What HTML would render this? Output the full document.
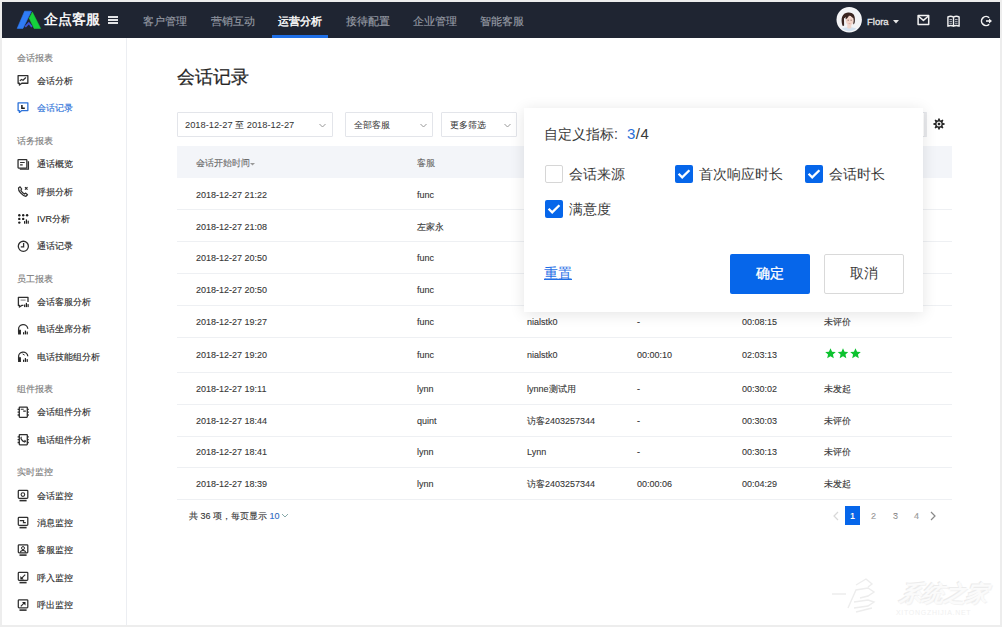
<!DOCTYPE html>
<html><head><meta charset="utf-8">
<style>
*{margin:0;padding:0;box-sizing:border-box}
html,body{width:1002px;height:627px;overflow:hidden;background:#fff;font-family:"Liberation Sans",sans-serif;}
#frame{position:absolute;left:0;top:0;width:1002px;height:627px;border:solid #ededed;border-width:2px 2px 2px 2px;pointer-events:none;z-index:10}
#hdr{position:absolute;left:1px;top:1px;width:999px;height:37px;background:#1f2532}
.nav{position:absolute;top:13px;font-size:11px;line-height:14px;color:#959aa3;-webkit-text-stroke:.15px #959aa3;white-space:nowrap}
#side{position:absolute;left:1px;top:38px;width:126px;height:587px;border-right:1px solid #eceef2}
.st{position:absolute;left:17px;font-size:9px;line-height:10px;color:#808080;-webkit-text-stroke:.15px #808080;white-space:nowrap}
.si{position:absolute;left:37px;font-size:9px;line-height:10px;color:#2a2a2a;-webkit-text-stroke:.12px #2a2a2a;white-space:nowrap}
.si.act{color:#2d72d9;-webkit-text-stroke:.12px #2d72d9}
.c{position:absolute;font-size:9px;line-height:11px;color:#363636;white-space:nowrap;-webkit-text-stroke:.1px #363636}
.n{display:inline-block;transform:none}
.sep{position:absolute;left:177px;width:775px;height:1px;background:#eef0f3}
.box{position:absolute;top:112px;height:25px;border:1px solid #e3e5ea;background:#fff;border-radius:1px}
.box span{position:absolute;left:8px;top:7px;font-size:9px;line-height:11px;color:#333;white-space:nowrap}
.chev{position:absolute;top:8px;width:9px;height:9px}
.pop{position:absolute;left:524px;top:108px;width:399px;height:204px;background:#fff;box-shadow:0 2px 14px rgba(0,0,0,.11)}
.pt{position:absolute;font-size:14px;line-height:16px;color:#3a3a3a;white-space:nowrap}
.cb{position:absolute;width:18px;height:18px;border-radius:2px}
.cb.on{background:#0666ea}
.cb.off{border:1px solid #d6d6d6;background:#fff}
</style></head><body>
<div id="hdr">
  <svg style="position:absolute;left:-1px;top:-1px" width="60" height="40" viewBox="0 0 60 40">
    <path d="M24.6 11.2H31.4L22.9 28.4H17.2z" fill="#2f7cf6" stroke="#2f7cf6" stroke-width=".6" stroke-linejoin="round"/>
    <path d="M32.4 12.2L40.6 28.4H34.1L29.3 18.2z" fill="#15d13c" stroke="#15d13c" stroke-width=".6" stroke-linejoin="round"/>
    <path d="M24.6 26.2L28.8 21.8L32.6 26.2L31.3 27.4L28.8 24.6L25.9 27.4z" fill="#3d55d6"/>
  </svg>
  <div style="position:absolute;left:43px;top:10px;font-size:14px;line-height:17px;color:#fff;-webkit-text-stroke:.45px #fff;white-space:nowrap">企点客服</div>
  <div style="position:absolute;left:107px;top:15px;width:10.3px;height:2px;background:#e2e3e6"></div>
  <div style="position:absolute;left:107px;top:18px;width:10.3px;height:2px;background:#e2e3e6"></div>
  <div style="position:absolute;left:107px;top:21px;width:10.3px;height:2px;background:#e2e3e6"></div>
  <div class="nav" style="left:142px">客户管理</div>
  <div class="nav" style="left:210px">营销互动</div>
  <div class="nav" style="left:277px;color:#fff;-webkit-text-stroke:.4px #fff">运营分析</div>
  <div style="position:absolute;left:271px;top:34px;width:56px;height:3px;background:#1f6fe6"></div>
  <div class="nav" style="left:345px">接待配置</div>
  <div class="nav" style="left:412px">企业管理</div>
  <div class="nav" style="left:479px">智能客服</div>
  <!-- avatar -->
  <svg style="position:absolute;left:833px;top:4px" width="30" height="30" viewBox="0 0 30 30">
    <defs><clipPath id="av"><circle cx="15.2" cy="14.7" r="11.5"/></clipPath></defs>
    <circle cx="15.2" cy="14.7" r="12.7" fill="#f6f6f8"/>
    <g clip-path="url(#av)">
      <rect width="30" height="30" fill="#f2f3f5"/>
      <path d="M3.5 30C4.5 24.5 9 22.3 15.3 22.3S25.5 24.5 26.5 30z" fill="#d3e2f0"/>
      <path d="M13.3 19.5h4v3.5c-1.3.8-2.7.8-4 0z" fill="#efd5ca"/>
      <path d="M8.4 20.5C6.6 14 7.8 8.2 14 7.6c5.6-.4 7.6 3.4 6.8 9.4-.3 1.6-.9 2.4-1.5 2.3V13c-2.5-.6-4.6-2-5.6-4-.9 2.2-2.2 3.6-3.7 4.4l.1 7.2c-.7.4-1.3.4-1.7-.1z" fill="#3a2520"/>
      <ellipse cx="15.6" cy="15.6" rx="3.9" ry="4.8" fill="#f1d4c9"/>
      <path d="M11.6 14.2c2-.9 3.2-2.6 3.8-5 1.2 1.8 2.6 3.2 4.4 3.8l-.4-3c-1.2-1.4-2.8-2-4.6-1.9-2.3.2-3.4 2.2-3.2 6.1z" fill="#3a2520"/>
      <path d="M13.6 15.2h1.3M16.5 15.2h1.3" stroke="#6b4a42" stroke-width=".7"/>
      <path d="M14.6 18.6h1.9" stroke="#d99a94" stroke-width=".7"/>
    </g>
  </svg>
  <div style="position:absolute;left:866px;top:15px;font-size:9.5px;line-height:11px;color:#e8e8e8;-webkit-text-stroke:.3px #e8e8e8;white-space:nowrap">Flora</div>
  <svg style="position:absolute;left:892px;top:18.5px" width="6" height="4" viewBox="0 0 6 4"><path d="M0 0h6L3 3.4z" fill="#e6e6e6"/></svg>
  <svg style="position:absolute;left:916px;top:13px" width="14" height="13" viewBox="0 0 14 13" fill="none" stroke="#f2f2f2" stroke-width="1.5" stroke-linejoin="round"><rect x="1.1" y="1.4" width="10.6" height="9.2"/><path d="M1.3 2l5.1 4.4L11.5 2"/></svg>
  <svg style="position:absolute;left:946px;top:14px" width="13" height="12" viewBox="0 0 13 12" fill="none" stroke="#f2f2f2" stroke-width="1.4" stroke-linejoin="round"><path d="M.9 2c1.8-.9 3.8-.9 5.6.2v9c-1.8-.9-3.8-.9-5.6 0zM12.1 2c-1.8-.9-3.8-.9-5.6.2v9c1.8-.9 3.8-.9 5.6 0z"/><path d="M2.4 4.5h2.6M2.4 6.4h2.6M2.4 8.3h2.6M8 4.5h2.6M8 6.4h2.6M8 8.3h2.6" stroke-width=".9" stroke="#b8bcc4"/></svg>
  <svg style="position:absolute;left:979px;top:14px" width="13" height="12" viewBox="0 0 13 12" fill="none" stroke="#f2f2f2" stroke-width="1.6"><path d="M9.2 2.8A4.5 4.5 0 1 0 9.2 9.2"/><path d="M6 6h3.2"/><path d="M9 3.4L12 6 9 8.6z" fill="#f2f2f2" stroke="none"/></svg>
</div>
<div id="side">
</div>
<div class="st" style="top:52.5px">会话报表</div><div class="si" style="top:75.5px">会话分析</div><svg style="position:absolute;left:17px;top:74px" width="13" height="13" viewBox="0 0 13 13" fill="none" stroke="#2f2f2f" stroke-width="1.3"><g transform="translate(0 0.50)"><path d="M1.1 1.05H10.85V8.75H4.8L2.4 10.6V8.75H1.1Z" stroke-linejoin="round"/><path d="M3.2 6l1.4-1 1.4.8 2.6-2.5" stroke-width="1.25" stroke-linecap="round" stroke-linejoin="round"/></g></svg><div class="si act" style="top:102.8px">会话记录</div><svg style="position:absolute;left:17px;top:101px" width="13" height="13" viewBox="0 0 13 13" fill="none" stroke="#2d72d9" stroke-width="1.3"><g transform="translate(0 0.80)"><path d="M1.1 1.05H10.85V8.75H4.8L2.4 10.6V8.75H1.1Z" stroke-linejoin="round"/><path d="M4.9 3.1v3.3h2.9" stroke="#1d1d1d" stroke-width="1.5"/></g></svg><div class="st" style="top:135.5px">话务报表</div><div class="si" style="top:159.0px">通话概览</div><svg style="position:absolute;left:17px;top:158px" width="13" height="13" viewBox="0 0 13 13" fill="none" stroke="#2f2f2f" stroke-width="1.3"><g transform="translate(0 0.00)"><rect x="1.05" y="1.65" width="8.8" height="8.4" rx=".5"/><path d="M11.4 3.2v7.9H2.8"/><path d="M3.1 4.5h4.6M3.1 6.9h2.6" stroke-width="1.2"/></g></svg><div class="si" style="top:186.5px">呼损分析</div><svg style="position:absolute;left:17px;top:185px" width="13" height="13" viewBox="0 0 13 13" fill="none" stroke="#2f2f2f" stroke-width="1.3"><g transform="translate(0 0.50)"><path d="M3.1 1.3L1.5 2.5C1.1 5.3 4.9 9.9 8.9 10.8L10.5 9.3 8.7 7.6 7.5 8.5C6.1 7.9 4.5 6.1 3.8 4.8L4.7 3.5Z" stroke-width="1.25" stroke-linejoin="round"/><path d="M8 1.6l2.5 2.5M10.5 1.6L8 4.1" stroke-width="1.2"/></g></svg><div class="si" style="top:213.5px">IVR分析</div><svg style="position:absolute;left:17px;top:212px" width="13" height="13" viewBox="0 0 13 13" fill="none" stroke="#2f2f2f" stroke-width="1.3"><g transform="translate(0 0.50)"><g fill="#1f1f1f" stroke="none"><circle cx="2.3" cy="2.7" r="1.2"/><circle cx="6.2" cy="2.7" r="1.2"/><circle cx="10.1" cy="2.7" r="1.2"/><circle cx="2.3" cy="6.4" r="1.2"/><circle cx="6.2" cy="6.4" r="1.2"/><circle cx="2.3" cy="10.1" r="1.2"/><rect x="7" y="8.6" width="1.2" height="2.6"/><rect x="8.8" y="6.9" width="1.2" height="4.3"/><rect x="10.6" y="8.2" width="1.2" height="3"/></g></g></svg><div class="si" style="top:241.0px">通话记录</div><svg style="position:absolute;left:17px;top:240px" width="13" height="13" viewBox="0 0 13 13" fill="none" stroke="#2f2f2f" stroke-width="1.3"><g transform="translate(0 0.00)"><circle cx="6.35" cy="6.3" r="5.05"/><path d="M6.6 3.1v3.7H3.8" stroke-width="1.3"/></g></svg><div class="st" style="top:273.5px">员工报表</div><div class="si" style="top:296.5px">会话客服分析</div><svg style="position:absolute;left:17px;top:295px" width="13" height="13" viewBox="0 0 13 13" fill="none" stroke="#2f2f2f" stroke-width="1.3"><g transform="translate(0 0.50)"><path d="M6.4 9.9H4.7L2.4 11.6V9.9H1.4V1.8H11V6.4" stroke-linejoin="round"/><path d="M3.6 4.6h5" stroke-width="1.1" stroke="#8a8a8a"/><g fill="#1f1f1f" stroke="none"><rect x="7.1" y="9" width="1.2" height="2.6"/><rect x="8.8" y="7.4" width="1.2" height="4.2"/><rect x="10.5" y="8.6" width="1.2" height="3"/></g></g></svg><div class="si" style="top:324.0px">电话坐席分析</div><svg style="position:absolute;left:17px;top:323px" width="13" height="13" viewBox="0 0 13 13" fill="none" stroke="#2f2f2f" stroke-width="1.3"><g transform="translate(0 0.00)"><path d="M1.6 9.6V6.6a4.6 4.6 0 0 1 9.2-.8"/><path d="M1.6 7.2h1.8v3.8H1.6z" stroke-width="1.1" fill="#1f1f1f"/><g fill="#1f1f1f" stroke="none"><rect x="6" y="9.2" width="1.2" height="2.2"/><rect x="7.8" y="7.6" width="1.2" height="3.8"/><rect x="9.6" y="8.6" width="1.2" height="2.8"/></g></g></svg><div class="si" style="top:351.5px">电话技能组分析</div><svg style="position:absolute;left:17px;top:350px" width="13" height="13" viewBox="0 0 13 13" fill="none" stroke="#2f2f2f" stroke-width="1.3"><g transform="translate(0 0.50)"><path d="M1.6 9.6V6.6a4.6 4.6 0 0 1 9.2-.8"/><path d="M5.6 3.4l2 1.2" stroke-width="1"/><path d="M1.6 7.2h1.8v3.8H1.6z" stroke-width="1.1" fill="#1f1f1f"/><g fill="#1f1f1f" stroke="none"><rect x="6" y="9.2" width="1.2" height="2.2"/><rect x="7.8" y="7.6" width="1.2" height="3.8"/><rect x="9.6" y="8.6" width="1.2" height="2.8"/></g></g></svg><div class="st" style="top:384.0px">组件报表</div><div class="si" style="top:407.0px">会话组件分析</div><svg style="position:absolute;left:17px;top:406px" width="13" height="13" viewBox="0 0 13 13" fill="none" stroke="#2f2f2f" stroke-width="1.3"><g transform="translate(0 0.00)"><rect x="2.3" y="1.05" width="8" height="10.3" rx=".5"/><path d="M.6 3.4h1.7M.6 6.2h1.7M.6 9h1.7M10.3 3.4h1.5M10.3 6.2h1.5M10.3 9h1.5" stroke-width="1.3"/><path d="M3.8 3.3h2.9M6.2 5.1h2.6" stroke-width="1.1"/></g></svg><div class="si" style="top:434.5px">电话组件分析</div><svg style="position:absolute;left:17px;top:433px" width="13" height="13" viewBox="0 0 13 13" fill="none" stroke="#2f2f2f" stroke-width="1.3"><g transform="translate(0 0.50)"><rect x="2.3" y="1.05" width="8" height="10.3" rx=".5"/><path d="M.6 3.4h1.7M.6 6.2h1.7M.6 9h1.7M10.3 3.4h1.5M10.3 6.2h1.5M10.3 9h1.5" stroke-width="1.3"/><path d="M4.6 3.4c-.9.5-.8 1.5 0 2.7.8 1.2 1.8 2 3 2.4l.9-.8-1-1" stroke-width="1.2"/></g></svg><div class="st" style="top:467.0px">实时监控</div><div class="si" style="top:490.5px">会话监控</div><svg style="position:absolute;left:17px;top:489px" width="13" height="13" viewBox="0 0 13 13" fill="none" stroke="#2f2f2f" stroke-width="1.3"><g transform="translate(0 0.50)"><rect x="1.3" y=".8" width="9.5" height="8" rx=".8" stroke-width="1.25"/><path d="M2.5 11.1h7.1" stroke-width="1.6"/><circle cx="5.9" cy="5.1" r="1.8" stroke-width="1.1"/></g></svg><div class="si" style="top:517.5px">消息监控</div><svg style="position:absolute;left:17px;top:516px" width="13" height="13" viewBox="0 0 13 13" fill="none" stroke="#2f2f2f" stroke-width="1.3"><g transform="translate(0 0.50)"><rect x="1.3" y=".8" width="9.5" height="8" rx=".8" stroke-width="1.25"/><path d="M2.5 11.1h7.1" stroke-width="1.6"/><path d="M2.7 4.1h4l-.3 2h2.4" stroke-width="1.1"/></g></svg><div class="si" style="top:545.0px">客服监控</div><svg style="position:absolute;left:17px;top:544px" width="13" height="13" viewBox="0 0 13 13" fill="none" stroke="#2f2f2f" stroke-width="1.3"><g transform="translate(0 0.00)"><rect x="1.3" y=".8" width="9.5" height="8" rx=".8" stroke-width="1.25"/><path d="M2.5 11.1h7.1" stroke-width="1.6"/><circle cx="6" cy="4.1" r="1.5" stroke-width="1"/><path d="M3 8.6C3.5 7 4.6 6.4 6 6.4S8.5 7 9 8.6" stroke-width="1.2"/></g></svg><div class="si" style="top:572.5px">呼入监控</div><svg style="position:absolute;left:17px;top:571px" width="13" height="13" viewBox="0 0 13 13" fill="none" stroke="#2f2f2f" stroke-width="1.3"><g transform="translate(0 0.50)"><rect x="1.3" y=".8" width="9.5" height="8" rx=".8" stroke-width="1.25"/><path d="M2.5 11.1h7.1" stroke-width="1.6"/><path d="M8.2 3.2L5 6.4" stroke-width="1.2"/><path d="M3.4 4.4V7.9H6.9Z" fill="#1f1f1f" stroke="none"/></g></svg><div class="si" style="top:600.0px">呼出监控</div><svg style="position:absolute;left:17px;top:599px" width="13" height="13" viewBox="0 0 13 13" fill="none" stroke="#2f2f2f" stroke-width="1.3"><g transform="translate(0 0.00)"><rect x="1.3" y=".8" width="9.5" height="8" rx=".8" stroke-width="1.25"/><path d="M2.5 11.1h7.1" stroke-width="1.6"/><path d="M3.8 7.4L7 4.2" stroke-width="1.2"/><path d="M5 3H8.5V6.5Z" fill="#1f1f1f" stroke="none"/></g></svg>
<div style="position:absolute;left:177px;top:67px;font-size:17.5px;line-height:21px;color:#262626;-webkit-text-stroke:.25px #262626;white-space:nowrap">会话记录</div>
<div class="box" style="left:177px;width:156px"><span style="left:7px;font-size:9.3px"><i class="n" style="font-style:normal">2018-12-27</i> 至 <i class="n" style="font-style:normal">2018-12-27</i></span><svg class="chev" style="left:140px" viewBox="0 0 9 9" fill="none" stroke="#999" stroke-width="1"><path d="M1.5 3l3 3 3-3"/></svg></div>
<div class="box" style="left:345px;width:88px"><span>全部客服</span><svg class="chev" style="left:73px" viewBox="0 0 9 9" fill="none" stroke="#999" stroke-width="1"><path d="M1.5 3l3 3 3-3"/></svg></div>
<div class="box" style="left:441px;width:76px"><span>更多筛选</span><svg class="chev" style="left:61px" viewBox="0 0 9 9" fill="none" stroke="#999" stroke-width="1"><path d="M1.5 3l3 3 3-3"/></svg></div>
<div class="box" style="left:880px;width:47px;border-right:3px solid #e9eaed"></div>
<svg style="position:absolute;left:933px;top:118px" width="12" height="12" viewBox="0 0 12 12"><path d="M4.74 2.31L5.59 0.21L6.41 0.21L7.26 2.31L7.72 2.50L9.80 1.62L10.38 2.20L9.50 4.28L9.69 4.74L11.79 5.59L11.79 6.41L9.69 7.26L9.50 7.72L10.38 9.80L9.80 10.38L7.72 9.50L7.26 9.69L6.41 11.79L5.59 11.79L4.74 9.69L4.28 9.50L2.20 10.38L1.62 9.80L2.50 7.72L2.31 7.26L0.21 6.41L0.21 5.59L2.31 4.74L2.50 4.28L1.62 2.20L2.20 1.62L4.28 2.50Z" fill="#262626"/><circle cx="6" cy="6" r="2.5" fill="#f4f4f4"/><circle cx="6" cy="6" r="1.3" fill="#262626"/></svg>
<div style="position:absolute;left:177px;top:146px;width:775px;height:32px;background:#f3f5f9"></div>
<div class="c" style="left:196px;top:158px;color:#777">会话开始时间</div>
<svg style="position:absolute;left:250px;top:163px" width="5" height="3" viewBox="0 0 5 3"><path d="M0 0h5L2.5 2.6z" fill="#999"/></svg>
<div class="c" style="left:417px;top:158px;color:#777">客服</div>
<div class="c" style="left:196px;top:189.7px"><span class="n">2018-12-27 21:22</span></div><div class="c" style="left:417px;top:189.7px"><span class="n">func</span></div><div class="c" style="left:196px;top:221.6px"><span class="n">2018-12-27 21:08</span></div><div class="c" style="left:417px;top:221.6px">左家永</div><div class="c" style="left:196px;top:253.4px"><span class="n">2018-12-27 20:50</span></div><div class="c" style="left:417px;top:253.4px"><span class="n">func</span></div><div class="c" style="left:196px;top:285.4px"><span class="n">2018-12-27 20:50</span></div><div class="c" style="left:417px;top:285.4px"><span class="n">func</span></div><div class="c" style="left:196px;top:317.2px"><span class="n">2018-12-27 19:27</span></div><div class="c" style="left:417px;top:317.2px"><span class="n">func</span></div><div class="c" style="left:527px;top:317.2px"><span class="n">nialstk0</span></div><div class="c" style="left:637px;top:317.2px"><span class="n">-</span></div><div class="c" style="left:742px;top:317.2px"><span class="n">00:08:15</span></div><div class="c" style="left:824px;top:317.2px">未评价</div><div class="c" style="left:196px;top:349.9px"><span class="n">2018-12-27 19:20</span></div><div class="c" style="left:417px;top:349.9px"><span class="n">func</span></div><div class="c" style="left:527px;top:349.9px"><span class="n">nialstk0</span></div><div class="c" style="left:637px;top:349.9px"><span class="n">00:00:10</span></div><div class="c" style="left:742px;top:349.9px"><span class="n">02:03:13</span></div><svg style="position:absolute;left:825px;top:348.0px" width="36" height="11" viewBox="0 0 36 11"><g><path d="M5.5 0.3l1.55 3.4 3.7.35-2.8 2.45.85 3.65-3.3-1.95-3.3 1.95.85-3.65-2.8-2.45 3.7-.35z" fill="#0dc22f"/></g><g transform="translate(12.5 0)"><path d="M5.5 0.3l1.55 3.4 3.7.35-2.8 2.45.85 3.65-3.3-1.95-3.3 1.95.85-3.65-2.8-2.45 3.7-.35z" fill="#0dc22f"/></g><g transform="translate(25 0)"><path d="M5.5 0.3l1.55 3.4 3.7.35-2.8 2.45.85 3.65-3.3-1.95-3.3 1.95.85-3.65-2.8-2.45 3.7-.35z" fill="#0dc22f"/></g></svg><div class="c" style="left:196px;top:383.9px"><span class="n">2018-12-27 19:11</span></div><div class="c" style="left:417px;top:383.9px"><span class="n">lynn</span></div><div class="c" style="left:527px;top:383.9px"><span class="n">lynne</span>测试用</div><div class="c" style="left:637px;top:383.9px"><span class="n">-</span></div><div class="c" style="left:742px;top:383.9px"><span class="n">00:30:02</span></div><div class="c" style="left:824px;top:383.9px">未发起</div><div class="c" style="left:196px;top:415.5px"><span class="n">2018-12-27 18:44</span></div><div class="c" style="left:417px;top:415.5px"><span class="n">quint</span></div><div class="c" style="left:527px;top:415.5px">访客<span class="n">2403257344</span></div><div class="c" style="left:637px;top:415.5px"><span class="n">-</span></div><div class="c" style="left:742px;top:415.5px"><span class="n">00:30:03</span></div><div class="c" style="left:824px;top:415.5px">未评价</div><div class="c" style="left:196px;top:447.3px"><span class="n">2018-12-27 18:41</span></div><div class="c" style="left:417px;top:447.3px"><span class="n">lynn</span></div><div class="c" style="left:527px;top:447.3px"><span class="n">Lynn</span></div><div class="c" style="left:637px;top:447.3px"><span class="n">-</span></div><div class="c" style="left:742px;top:447.3px"><span class="n">00:30:13</span></div><div class="c" style="left:824px;top:447.3px">未评价</div><div class="c" style="left:196px;top:479.4px"><span class="n">2018-12-27 18:39</span></div><div class="c" style="left:417px;top:479.4px"><span class="n">lynn</span></div><div class="c" style="left:527px;top:479.4px">访客<span class="n">2403257344</span></div><div class="c" style="left:637px;top:479.4px"><span class="n">00:00:06</span></div><div class="c" style="left:742px;top:479.4px"><span class="n">00:04:29</span></div><div class="c" style="left:824px;top:479.4px">未发起</div><div class="sep" style="top:209px"></div><div class="sep" style="top:241px"></div><div class="sep" style="top:273px"></div><div class="sep" style="top:305px"></div><div class="sep" style="top:337px"></div><div class="sep" style="top:372px"></div><div class="sep" style="top:404px"></div><div class="sep" style="top:436px"></div><div class="sep" style="top:467px"></div><div class="sep" style="top:499px"></div>
<div class="c" style="left:189px;top:511px">共 36 项，每页显示 <span style="color:#2d72d9">10</span></div>
<svg style="position:absolute;left:281px;top:513px" width="8" height="6" viewBox="0 0 8 6" fill="none" stroke="#8aa" stroke-width="1"><path d="M1 1l3 3 3-3"/></svg>
<svg style="position:absolute;left:833px;top:511px" width="6" height="10" viewBox="0 0 6 10" fill="none" stroke="#d8d8d8" stroke-width="1.2"><path d="M5 1L1 5l4 4"/></svg>
<div style="position:absolute;left:845px;top:506px;width:15px;height:19px;background:#0666ea"></div>
<div class="c" style="left:850px;top:511px;color:#fff;font-weight:bold">1</div>
<div class="c" style="left:871px;top:511px;color:#aaa">2</div>
<div class="c" style="left:893px;top:511px;color:#aaa">3</div>
<div class="c" style="left:914px;top:511px;color:#aaa">4</div>
<svg style="position:absolute;left:930px;top:511px" width="6" height="10" viewBox="0 0 6 10" fill="none" stroke="#888" stroke-width="1.2"><path d="M1 1l4 4-4 4"/></svg>

<div style="position:absolute;left:900px;top:581px;font-size:22px;line-height:26px;color:#fbfbfb;font-style:italic;font-weight:bold;text-shadow:-1px -1px 0 #ececec,1px 1px 0 #f3f3f3;white-space:nowrap;transform:skewX(-8deg)">系统之家</div>
<div style="position:absolute;left:896px;top:609px;width:98px;height:7px;font-size:7px;line-height:7px;color:#f0f0f0;letter-spacing:.7px;white-space:nowrap">XITONGZHIJIA.NET</div>
<svg style="position:absolute;left:826px;top:572px" width="76" height="45" viewBox="0 0 76 45" fill="none" stroke="#ededed" stroke-width="1.4"><path d="M6 22h14M30 13l10-6 6 5-4 3M22 36l8-18 12-2 6 4-6 4-8 2M28 30l14-2 6 2-6 4-14 2M30 40l16-4"/></svg>
<div class="pop">
  <div class="pt" style="left:20px;top:18px">自定义指标:<span style="font-size:15px;letter-spacing:.6px;margin-left:9px"><span style="color:#2a6fd8">3</span>/4</span></div>
  <div class="cb off" style="left:21px;top:57px"></div>
  <div class="pt" style="left:45px;top:58px">会话来源</div>
  <div class="cb on" style="left:151px;top:57px"><svg width="18" height="18" viewBox="0 0 18 18" fill="none" stroke="#fff" stroke-width="2.3"><path d="M3.6 8.8l3.6 3.6 7.2-7.2"/></svg></div>
  <div class="pt" style="left:175px;top:58px">首次响应时长</div>
  <div class="cb on" style="left:281px;top:57px"><svg width="18" height="18" viewBox="0 0 18 18" fill="none" stroke="#fff" stroke-width="2.3"><path d="M3.6 8.8l3.6 3.6 7.2-7.2"/></svg></div>
  <div class="pt" style="left:305px;top:58px">会话时长</div>
  <div class="cb on" style="left:21px;top:92px"><svg width="18" height="18" viewBox="0 0 18 18" fill="none" stroke="#fff" stroke-width="2.3"><path d="M3.6 8.8l3.6 3.6 7.2-7.2"/></svg></div>
  <div class="pt" style="left:45px;top:93px">满意度</div>
  <div class="pt" style="left:20px;top:157px;color:#1f6fe6;text-decoration:underline">重置</div>
  <div style="position:absolute;left:206px;top:146px;width:80px;height:40px;background:#0666ea;border-radius:2px"></div>
  <div class="pt" style="left:232px;top:157px;color:#fff;-webkit-text-stroke:.3px #fff">确定</div>
  <div style="position:absolute;left:300px;top:146px;width:80px;height:40px;border:1px solid #d9d9d9;border-radius:2px"></div>
  <div class="pt" style="left:326px;top:157px">取消</div>
</div>
<div id="frame"></div>
</body></html>
